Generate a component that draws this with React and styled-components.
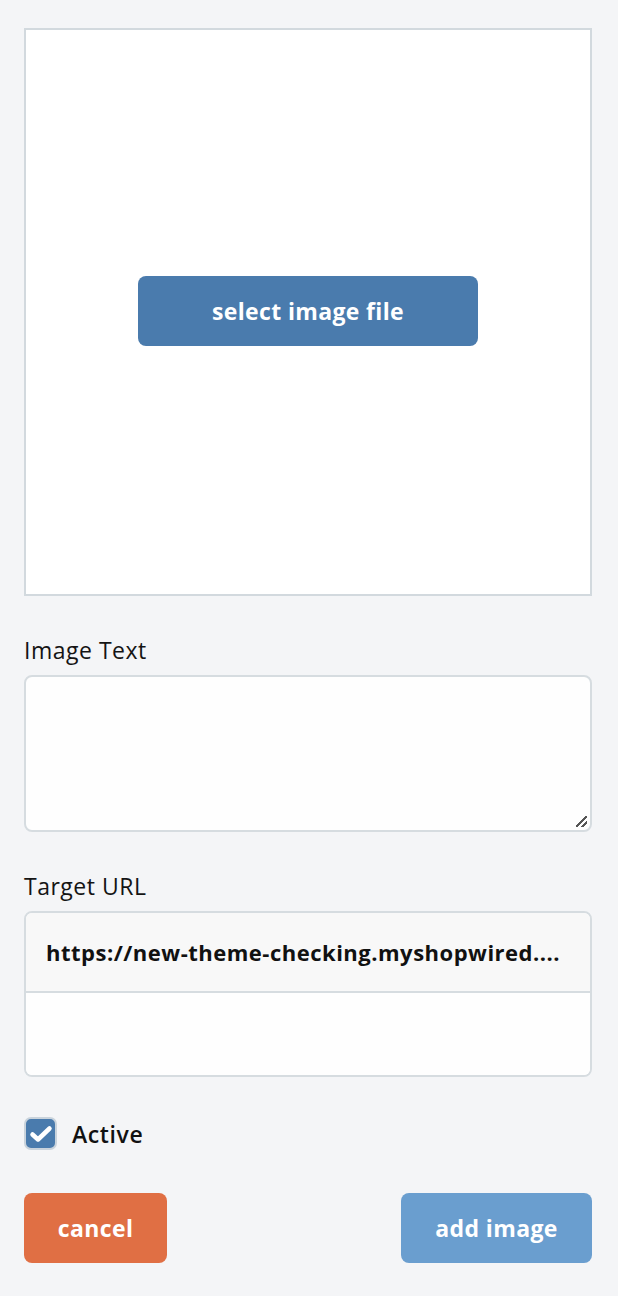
import React from 'react';
import styled, { createGlobalStyle } from 'styled-components';

const GlobalStyle = createGlobalStyle`
  html, body {
    margin: 0;
    padding: 0;
    background: #f4f5f7;
  }
  * {
    box-sizing: border-box;
  }
`;

function App() {
    return (
        <>
            <GlobalStyle />
            <Page>
                <ImageDrop>
                    <SelectButton type="button">select image file</SelectButton>
                </ImageDrop>

                <Field>
                    <Label>Image Text</Label>
                    <TextArea />
                </Field>

                <Field>
                    <Label>Target URL</Label>
                    <UrlBox>
                        <UrlValue>https://new-theme-checking.myshopwired....</UrlValue>
                        <UrlInput />
                    </UrlBox>
                </Field>

                <CheckRow>
                    <CheckBox>
                        <svg width="24" height="18" viewBox="0 0 24 18">
                            <path d="M3.5 9.5 L9 14.5 L20.5 3.5" fill="none" stroke="#fff" strokeWidth="4.5" strokeLinecap="round" strokeLinejoin="round" />
                        </svg>
                    </CheckBox>
                    <CheckText>Active</CheckText>
                </CheckRow>

                <ButtonRow>
                    <ActionButton $color="#e06f44" $width="143px">cancel</ActionButton>
                    <ActionButton $color="#6a9ecf" $width="191px">add image</ActionButton>
                </ButtonRow>
            </Page>
        </>
    );
}

export default App;

const Page = styled.div`
    width: 618px;
    min-height: 1296px;
    padding: 28px 26px 0 24px;
    font-family: "Open Sans", Lato, sans-serif;
    color: #111;
`

const ImageDrop = styled.div`
    width: 568px;
    height: 568px;
    border: 2px solid #d2d9de;
    background: #fff;
    display: flex;
    justify-content: center;
    align-items: center;
`

const SelectButton = styled.button`
    width: 340px;
    height: 70px;
    border: none;
    border-radius: 8px;
    background: #4a7bad;
    color: #fff;
    font-family: "Open Sans", Lato, sans-serif;
    font-size: 23px;
    font-weight: 700;
    letter-spacing: 0.35px;
    margin-top: -2px;
    cursor: pointer;
`

const Field = styled.div`
    display: flex;
    flex-direction: column;
    margin-top: 40px;
`

const Label = styled.div`
    font-size: 23px;
    line-height: 28px;
    letter-spacing: 0.5px;
    margin-bottom: 11px;
    color: #141414;
`

const TextArea = styled.div`
    width: 568px;
    height: 157px;
    border: 2px solid #d6dce0;
    border-radius: 8px;
    background: #fefefe;
    position: relative;

    &::after {
        content: '';
        position: absolute;
        right: 3px;
        bottom: 3px;
        width: 11px;
        height: 11px;
        background:
            linear-gradient(135deg, transparent 45%, #555 45%, #555 55%, transparent 55%) no-repeat,
            linear-gradient(135deg, transparent 72%, #555 72%, #555 84%, transparent 84%) no-repeat;
    }
`

const UrlBox = styled.div`
    width: 568px;
    border: 2px solid #d6dce0;
    border-radius: 8px;
    overflow: hidden;
    background: #fefefe;
`

const UrlValue = styled.div`
    height: 80px;
    display: flex;
    align-items: center;
    padding: 0 20px;
    background: #f8f8f8;
    border-bottom: 2px solid #d6dce0;
    font-size: 22px;
    font-weight: 700;
    letter-spacing: 0.5px;
    color: #111;
    white-space: nowrap;
    overflow: hidden;
    text-overflow: ellipsis;
`

const UrlInput = styled.div`
    height: 82px;
    background: #fefefe;
`

const CheckRow = styled.div`
    display: flex;
    align-items: center;
    gap: 15px;
    margin-top: 40px;
`

const CheckBox = styled.div`
    width: 33px;
    height: 33px;
    border-radius: 7px;
    background: #4a7bad;
    border: 2px solid #c9d3dc;
    display: flex;
    justify-content: center;
    align-items: center;
`

const CheckText = styled.div`
    font-size: 23px;
    font-weight: 600;
    letter-spacing: 0.6px;
    color: #111;
`

const ButtonRow = styled.div`
    display: flex;
    justify-content: space-between;
    margin-top: 43px;
`

const ActionButton = styled.button`
    width: ${p => p.$width};
    height: 70px;
    border: none;
    border-radius: 8px;
    background: ${p => p.$color};
    color: #fff;
    font-family: "Open Sans", Lato, sans-serif;
    font-size: 23px;
    font-weight: 700;
    letter-spacing: 0.4px;
    cursor: pointer;
`
